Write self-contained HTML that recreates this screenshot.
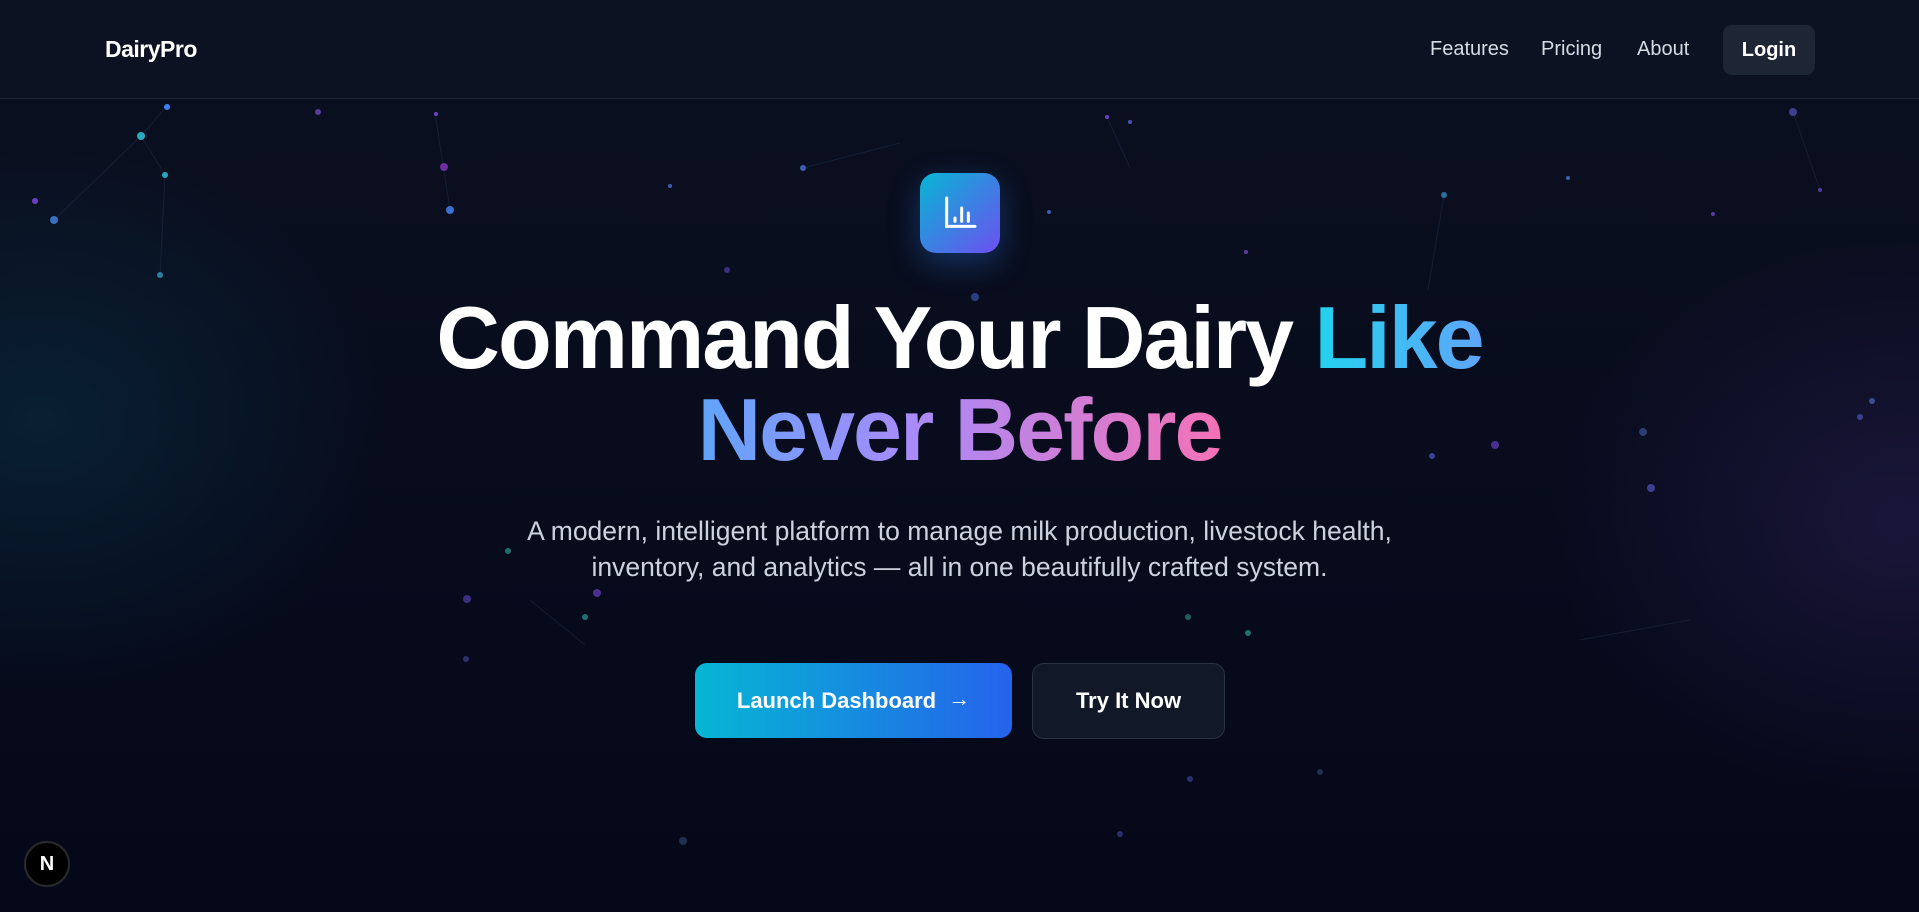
<!DOCTYPE html>
<html><head><meta charset="utf-8"><style>
*{margin:0;padding:0;box-sizing:border-box}
html,body{width:1919px;height:912px;overflow:hidden}
body{font-family:"Liberation Sans",sans-serif;color:#fff;position:relative;
background:radial-gradient(ellipse 500px 400px at 40px 420px,rgba(8,70,90,.35),transparent 70%),
radial-gradient(ellipse 500px 400px at 1900px 520px,rgba(60,40,110,.35),transparent 70%),
linear-gradient(180deg,#0b1020 0%,#070b1c 60%,#050818 100%);}
nav{position:absolute;left:0;top:0;width:1919px;height:99px;border-bottom:1px solid #1a2233;background:rgba(14,20,36,.6)}
.logo{position:absolute;left:105px;top:36px;font-size:23px;font-weight:700;letter-spacing:-.5px}
.links{position:absolute;top:38px;font-size:20px;color:#d6dbe4}
.login{position:absolute;left:1723px;top:25px;width:92px;height:50px;border-radius:9px;background:#1e2636;font-size:20px;font-weight:600;display:flex;align-items:center;justify-content:center}
.icon{position:absolute;left:920px;top:173px;width:80px;height:80px;border-radius:16px;background:linear-gradient(135deg,#06b6d4,#6d4ff0);box-shadow:0 10px 30px rgba(40,120,230,.35);display:flex;align-items:center;justify-content:center}
h1{position:absolute;left:0;width:1919px;text-align:center;font-size:88px;font-weight:700;letter-spacing:-2px;line-height:92px;top:292px}
.g1{background:linear-gradient(90deg,#22d3ee,#60a5fa);-webkit-background-clip:text;color:transparent}
.g2{background:linear-gradient(90deg,#60a5fa,#a78bfa 40%,#f472b6);-webkit-background-clip:text;color:transparent}
p{position:absolute;left:0;width:1919px;text-align:center;top:513px;font-size:26.5px;line-height:36px;color:#cdd3de}
.b1{position:absolute;left:695px;top:663px;width:317px;height:75px;border-radius:12px;background:linear-gradient(90deg,#06b6d4,#2563eb);font-size:22px;font-weight:600;display:flex;align-items:center;justify-content:center;gap:12px}
.b2{position:absolute;left:1032px;top:663px;width:193px;height:76px;border-radius:12px;background:#111827;border:1px solid #2a3344;font-size:22px;font-weight:600;display:flex;align-items:center;justify-content:center}
.n{position:absolute;left:24px;top:841px;width:46px;height:46px;border-radius:50%;background:#000;border:2px solid #2a2a2a;display:flex;align-items:center;justify-content:center;font-size:20px;font-weight:700}
svg.bg{position:absolute;left:0;top:0}
</style></head><body>
<svg class="bg" width="1919" height="912">
<g stroke="#1c2a44" stroke-width="1" opacity=".6">
<line x1="141" y1="136" x2="166" y2="107"/><line x1="141" y1="136" x2="165" y2="175"/><line x1="54" y1="220" x2="141" y2="136"/><line x1="165" y1="175" x2="160" y2="275"/><line x1="435" y1="113" x2="450" y2="210"/><line x1="803" y1="168" x2="900" y2="143"/><line x1="1107" y1="117" x2="1130" y2="168"/><line x1="1444" y1="195" x2="1428" y2="290"/><line x1="1793" y1="112" x2="1820" y2="190"/><line x1="1690" y1="620" x2="1580" y2="640"/><line x1="530" y1="600" x2="585" y2="645"/></g>
<g>
<circle cx="141" cy="136" r="4" fill="#2aa7c0"/><circle cx="167" cy="107" r="3" fill="#3b82f6"/><circle cx="165" cy="175" r="3" fill="#2aa7c0"/><circle cx="54" cy="220" r="4" fill="#3b6fc0"/><circle cx="35" cy="201" r="3" fill="#6d3fc0"/><circle cx="160" cy="275" r="3" fill="#2a7fa0"/>
<circle cx="318" cy="112" r="3" fill="#5b3aa0"/><circle cx="444" cy="167" r="4" fill="#6d2fa0"/><circle cx="450" cy="210" r="4" fill="#3b6fd0"/><circle cx="436" cy="114" r="2" fill="#6d3fc0"/>
<circle cx="803" cy="168" r="3" fill="#3b5fb0"/><circle cx="670" cy="186" r="2" fill="#3b5fb0"/><circle cx="727" cy="270" r="3" fill="#3a2f80"/><circle cx="975" cy="297" r="4" fill="#2a3f80"/><circle cx="1049" cy="212" r="2" fill="#3b5fb0"/>
<circle cx="1107" cy="117" r="2" fill="#6d3fc0"/><circle cx="1130" cy="122" r="2" fill="#4b4fc0"/><circle cx="1246" cy="252" r="2" fill="#5b3aa0"/><circle cx="1444" cy="195" r="3" fill="#2a6fa0"/><circle cx="1568" cy="178" r="2" fill="#3b5fb0"/>
<circle cx="1793" cy="112" r="4" fill="#3a3f90"/><circle cx="1820" cy="190" r="2" fill="#5b3aa0"/><circle cx="1713" cy="214" r="2" fill="#5b3aa0"/>
<circle cx="1643" cy="432" r="4" fill="#2a3f70"/><circle cx="1651" cy="488" r="4" fill="#3a3f90"/><circle cx="1495" cy="445" r="4" fill="#4b2f90"/><circle cx="1432" cy="456" r="3" fill="#3a3f90"/><circle cx="1872" cy="401" r="3" fill="#3a4f90"/><circle cx="1860" cy="417" r="3" fill="#3a3f90"/>
<circle cx="508" cy="551" r="3" fill="#1f6f70"/><circle cx="467" cy="599" r="4" fill="#3a2f80"/><circle cx="597" cy="593" r="4" fill="#4b2f90"/><circle cx="585" cy="617" r="3" fill="#1f6f70"/><circle cx="466" cy="659" r="3" fill="#2a2f70"/><circle cx="1248" cy="633" r="3" fill="#1f6f70"/><circle cx="1188" cy="617" r="3" fill="#1f5f60"/>
<circle cx="1190" cy="779" r="3" fill="#2a2f70"/><circle cx="1120" cy="834" r="3" fill="#2a2f70"/><circle cx="683" cy="841" r="4" fill="#1f2f50"/><circle cx="1320" cy="772" r="3" fill="#1f2f50"/>
</g></svg>
<nav><div class="logo">DairyPro</div>
<div class="links" style="left:1430px">Features</div><div class="links" style="left:1541px">Pricing</div><div class="links" style="left:1637px">About</div>
<div class="login">Login</div></nav>
<div class="icon"><svg width="40" height="40" viewBox="0 0 24 24" fill="none" stroke="#fff" stroke-width="1.8" stroke-linecap="round"><path d="M4 3v17h17M9 15v2M13 9v8M17 12v5"/></svg></div>
<h1>Command Your Dairy <span class="g1">Like</span><br><span class="g2">Never Before</span></h1>
<p>A modern, intelligent platform to manage milk production, livestock health,<br>inventory, and analytics — all in one beautifully crafted system.</p>
<div class="b1">Launch Dashboard <span style="font-weight:400;position:relative;top:-2px">→</span></div>
<div class="b2">Try It Now</div>
<div class="n">N</div>
</body></html>
